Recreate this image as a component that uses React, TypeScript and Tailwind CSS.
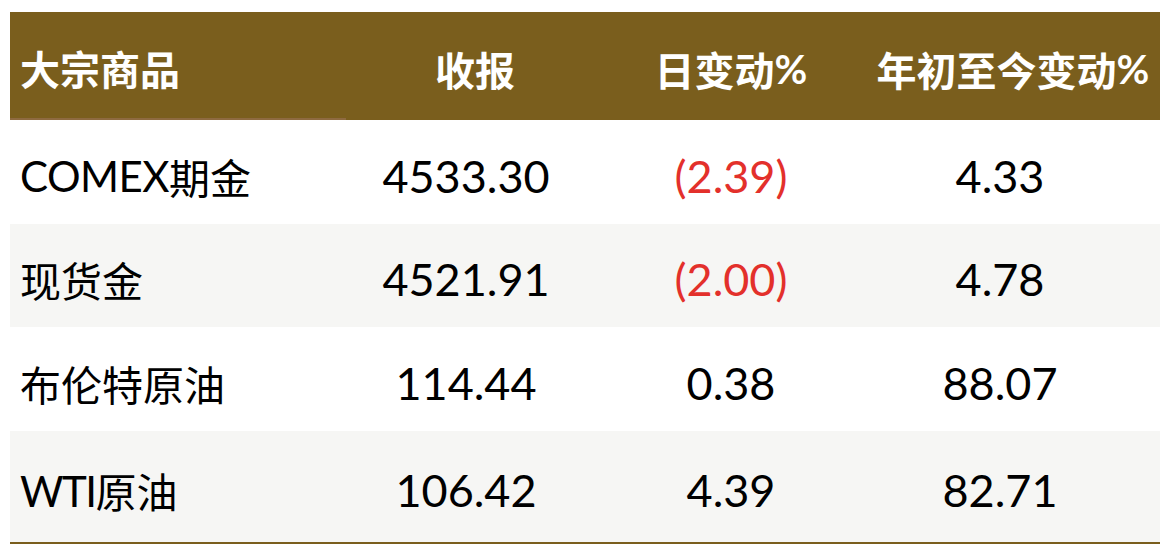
import React from 'react';

const latin = "font-['Lato','Noto_Sans_CJK_SC',sans-serif]";
const cjk = "font-['Noto_Sans_CJK_SC',sans-serif]";

type Row = {
    name: React.ReactNode;
    close: string;
    day: string;
    ytd: string;
    shaded: boolean;
    height: string;
};

const rows: Row[] = [
    {
        name: (
            <>
                <span className={`${latin} text-[42px] tracking-[-0.5px]`}>COMEX</span>
                <span className={`${cjk} text-[41px]`}>期金</span>
            </>
        ),
        close: '4533.30',
        day: '(2.39)',
        ytd: '4.33',
        shaded: false,
        height: 'h-[104px]',
    },
    {
        name: <span className={`${cjk} text-[41px]`}>现货金</span>,
        close: '4521.91',
        day: '(2.00)',
        ytd: '4.78',
        shaded: true,
        height: 'h-[103px]',
    },
    {
        name: <span className={`${cjk} text-[41px]`}>布伦特原油</span>,
        close: '114.44',
        day: '0.38',
        ytd: '88.07',
        shaded: false,
        height: 'h-[104px]',
    },
    {
        name: (
            <>
                <span className={`${latin} text-[42px] tracking-[-1.5px]`}>WTI</span>
                <span className={`${cjk} text-[41px]`}>原油</span>
            </>
        ),
        close: '106.42',
        day: '4.39',
        ytd: '82.71',
        shaded: true,
        height: 'h-[111px]',
    },
];

export default function App() {
    return (
        <div className="w-[1172px] h-[550px] bg-white pt-[12px] pl-[10px] overflow-hidden">
            <div className="w-[1150px] border-b-[2px] border-[#7a5e1d]">
                {/* header */}
                <div className="grid grid-cols-[336px_240px_290px_284px] h-[108px] bg-[#7a5e1d] text-white font-bold text-[40px] leading-none whitespace-nowrap">
                    <div className="flex items-center pl-[10px] pt-[6px] border-b-[2px] border-[#8e6a40]">
                        <span className={cjk}>大宗商品</span>
                    </div>
                    <div className="flex items-center justify-center pl-[18px] pt-[6px]">
                        <span className={cjk}>收报</span>
                    </div>
                    <div className="flex items-center justify-center pt-[6px]">
                        <span className={cjk}>日变动</span>
                        <span className={latin}>%</span>
                    </div>
                    <div className="flex items-center justify-center pr-[10px] pt-[6px]">
                        <span className={cjk}>年初至今变动</span>
                        <span className={latin}>%</span>
                    </div>
                </div>

                {rows.map((r, i) => (
                    <div
                        key={i}
                        className={`grid grid-cols-[336px_240px_290px_284px] ${r.height} ${r.shaded ? 'bg-[#f6f6f4]' : 'bg-white'} text-black leading-none whitespace-nowrap`}
                    >
                        <div className="flex items-center pl-[10px] pt-[8px]">{r.name}</div>
                        <div className={`flex items-center justify-center pt-[8px] ${latin} text-[45px]`}>
                            {r.close}
                        </div>
                        <div
                            className={`flex items-center justify-center pt-[8px] ${latin} text-[45px] ${r.day.startsWith('(') ? 'text-[#e3302b]' : 'text-black'}`}
                        >
                            {r.day}
                        </div>
                        <div className={`flex items-center justify-center pr-[36px] pt-[8px] ${latin} text-[45px]`}>
                            {r.ytd}
                        </div>
                    </div>
                ))}
            </div>
        </div>
    );
}
